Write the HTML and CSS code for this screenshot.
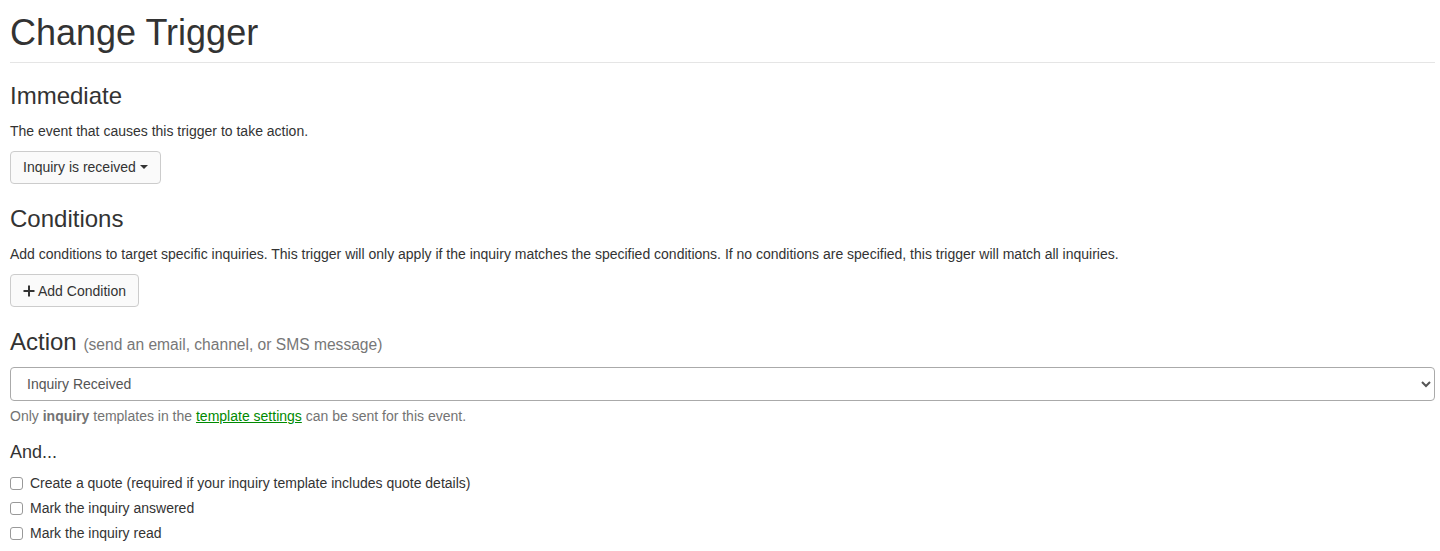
FILE: index.html
```html
<!DOCTYPE html>
<html lang="en">

<head>
  <meta charset="UTF-8">
  <meta name="viewport" content="width=device-width, initial-scale=1.0">
  <title>Change Trigger</title>
  <link rel="stylesheet" href="styles.css">
</head>

<body>
  <div class="page">
    <h1 class="page-title">Change Trigger</h1>

    <!-- Immediate -->
    <h3>Immediate</h3>
    <p>The event that causes this trigger to take action.</p>
    <div class="btn-row">
      <button class="btn">Inquiry is received <span class="caret"></span></button>
    </div>

    <!-- Conditions -->
    <h3>Conditions</h3>
    <p>Add conditions to target specific inquiries. This trigger will only apply if the inquiry matches the specified conditions. If no conditions are specified, this trigger will match all inquiries.</p>
    <div class="btn-row">
      <button class="btn">
        <svg class="icon-plus" width="12" height="12" viewBox="0 0 12 12">
          <path d="M6 0.5V11.5M0.5 6H11.5" stroke="#333" stroke-width="2" fill="none"/>
        </svg>Add Condition
      </button>
    </div>

    <!-- Action -->
    <h3 class="action-title">Action <small>(send an email, channel, or SMS message)</small></h3>
    <select class="form-control">
      <option>Inquiry Received</option>
    </select>
    <p class="help-block">Only <strong>inquiry</strong> templates in the <a href="#">template settings</a> can be sent for this event.</p>

    <h4>And...</h4>
    <div class="checks">
      <label class="check"><input type="checkbox"> Create a quote (required if your inquiry template includes quote details)</label>
      <label class="check"><input type="checkbox"> Mark the inquiry answered</label>
      <label class="check"><input type="checkbox"> Mark the inquiry read</label>
    </div>
  </div>
</body>

</html>
```

FILE: styles.css
```css
body {
  font-family: "Liberation Sans", Arial, sans-serif;
  font-size: 14px;
  color: #333;
  background: #fff;
  margin: 0;
  padding: 0;
}

.page {
  padding: 0 5px 0 10px;
}

h1,
h3,
h4 {
  font-weight: 500;
  line-height: 1.1;
  color: #333;
}

.page-title {
  font-size: 36px;
  margin: 13px 0 0;
  padding-bottom: 9px;
  border-bottom: 1px solid #e5e5e5;
}

h3 {
  font-size: 24px;
  margin: 20px 0 12px;
}

.action-title {
  margin-bottom: 11px;
}

h3 small {
  font-size: 65%;
  font-weight: normal;
  color: #777;
}

p {
  margin: 0 0 10px;
  line-height: 20px;
}

.btn-row {
  display: flex;
  padding-bottom: 2px;
}

.btn {
  display: inline-flex;
  align-items: center;
  height: 33px;
  padding: 0 12px;
  font-family: inherit;
  font-size: 14px;
  color: #333;
  background: #fafafa;
  border: 1px solid #ccc;
  border-radius: 4px;
  cursor: pointer;
}

.caret {
  display: inline-block;
  width: 0;
  height: 0;
  margin-left: 4px;
  border-top: 4px solid #333;
  border-left: 4px solid transparent;
  border-right: 4px solid transparent;
}

.icon-plus {
  margin-right: 3px;
}

.form-control {
  display: block;
  width: 100%;
  height: 34px;
  padding: 0 12px;
  font-family: inherit;
  font-size: 14px;
  color: #555;
  background: #fff;
  border: 1px solid #aaa;
  border-radius: 4px;
}

.help-block {
  margin: 5px 0 10px;
  line-height: 20px;
  color: #737373;
}

.help-block a {
  color: #008a00;
  text-decoration: underline;
}

h4 {
  font-size: 18px;
  margin: 17px 0 8px;
}

.checks {
  display: flex;
  flex-direction: column;
}

.check {
  display: flex;
  align-items: center;
  gap: 3px;
  height: 25px;
  font-size: 14px;
}

.check input {
  appearance: none;
  margin: 0 4px 0 0;
  width: 13px;
  height: 13px;
  border: 1px solid #999;
  border-radius: 3px;
  background: #fff;
}
```
